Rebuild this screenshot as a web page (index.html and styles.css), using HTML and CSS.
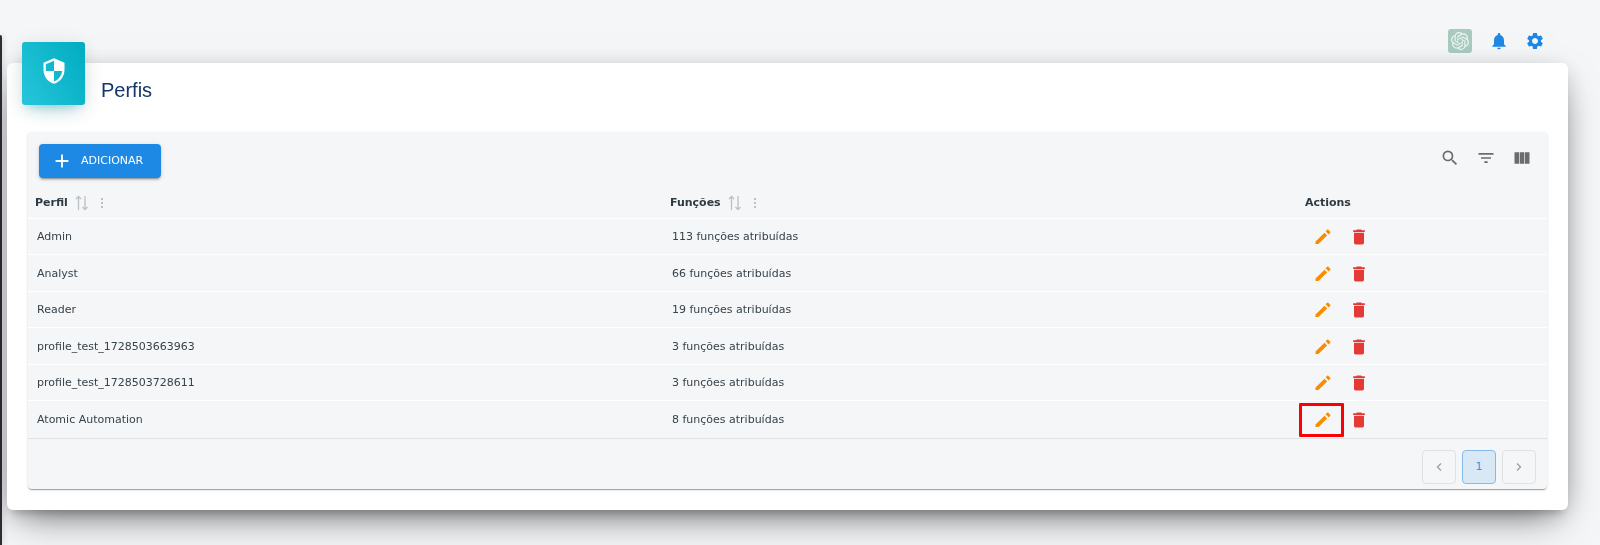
FILE: index.html
```html
<!DOCTYPE html>
<html lang="pt-BR">
<head>
<meta charset="utf-8">
<title>Perfis</title>
<link rel="stylesheet" href="styles.css">
</head>
<body>
<svg class="sprite" aria-hidden="true">
  <symbol id="pencil" viewBox="0 0 24 24"><path d="M3 17.500V20.500h3.500L17 10.200 13.800 7zM20.700 7c.4-.4.4-1 0-1.400l-2.300-2.300c-.4-.4-1-.4-1.400 0l-1.900 1.900 3.700 3.700z"/></symbol>
  <symbol id="trash" viewBox="0 0 24 24"><path d="M6 19c0 1.100.9 2 2 2h8c1.100 0 2-.9 2-2V7H6zM19 4h-3.500l-1-1h-5l-1 1H5v2h14z"/></symbol>
  <symbol id="sort" viewBox="0 0 14 16"><path d="M3.500 15V1.500M1 4l2.500-2.500L6 4M10 1v13.500M7.500 12l2.500 2.500 2.500-2.500" fill="none" stroke="currentColor" stroke-width="1.300"/></symbol>
  <symbol id="dots" viewBox="0 0 4 14"><path d="M1 2h2v2H1zM1 6h2v2H1zM1 10h2v2H1z"/></symbol>
</svg>
<aside class="rail"></aside>
<header class="topbar">
  <button class="icon-btn gpt" aria-label="Assistente">
    <svg viewBox="0 0 24 24"><path d="M22.282 9.821a5.985 5.985 0 0 0-.516-4.910 6.046 6.046 0 0 0-6.510-2.900A6.065 6.065 0 0 0 4.981 4.182a5.985 5.985 0 0 0-3.998 2.900 6.046 6.046 0 0 0 .743 7.097 5.980 5.980 0 0 0 .511 4.911 6.051 6.051 0 0 0 6.515 2.900A5.985 5.985 0 0 0 13.260 24a6.056 6.056 0 0 0 5.772-4.206 5.990 5.990 0 0 0 3.998-2.900 6.056 6.056 0 0 0-.748-7.073zM13.260 22.430a4.476 4.476 0 0 1-2.876-1.040l.142-.081 4.778-2.758a.795.795 0 0 0 .393-.681v-6.737l2.020 1.169a.071.071 0 0 1 .038.052v5.583a4.504 4.504 0 0 1-4.495 4.493zM3.600 18.304a4.471 4.471 0 0 1-.535-3.014l.142.085 4.783 2.759a.771.771 0 0 0 .781 0l5.843-3.369v2.332a.080.080 0 0 1-.033.062L9.740 19.950a4.500 4.500 0 0 1-6.140-1.646zM2.341 7.896a4.485 4.485 0 0 1 2.366-1.973V11.600a.766.766 0 0 0 .388.677l5.815 3.354-2.020 1.169a.076.076 0 0 1-.071 0l-4.830-2.787A4.504 4.504 0 0 1 2.341 7.872zm16.597 3.855l-5.833-3.387L15.119 7.200a.076.076 0 0 1 .071 0l4.830 2.791a4.494 4.494 0 0 1-.676 8.105v-5.678a.790.790 0 0 0-.407-.667zm2.011-3.023l-.142-.085-4.774-2.782a.776.776 0 0 0-.785 0L9.409 9.230V6.897a.066.066 0 0 1 .028-.061l4.830-2.787a4.499 4.499 0 0 1 6.680 4.660zm-12.640 4.135l-2.020-1.164a.080.080 0 0 1-.038-.057V6.075a4.499 4.499 0 0 1 7.376-3.454l-.142.081L8.704 5.460a.795.795 0 0 0-.393.681zm1.097-2.365l2.602-1.500 2.607 1.500v2.999l-2.597 1.500-2.607-1.500z"/></svg>
  </button>
  <button class="icon-btn" aria-label="Notificações">
    <svg viewBox="0 0 24 24"><path d="M12 22c1.100 0 2-.9 2-2h-4c0 1.100.9 2 2 2zm6-6v-5c0-3.070-1.640-5.640-4.500-6.320V4c0-.83-.67-1.500-1.500-1.500s-1.500.67-1.500 1.500v.68C7.630 5.360 6 7.920 6 11v5l-2 2v1h16v-1z"/></svg>
  </button>
  <button class="icon-btn" aria-label="Configurações">
    <svg viewBox="0 0 24 24"><path d="M19.140 12.940c.04-.3.060-.61.060-.94 0-.32-.02-.64-.07-.94l2.030-1.580c.18-.14.230-.41.120-.61l-1.920-3.320c-.12-.22-.37-.29-.59-.22l-2.390.96c-.5-.38-1.030-.7-1.620-.94l-.36-2.540c-.04-.24-.24-.41-.48-.41h-3.840c-.24 0-.43.170-.47.410l-.36 2.540c-.59.240-1.130.570-1.620.940l-2.390-.96c-.22-.08-.47 0-.59.220L2.740 8.870c-.12.210-.08.470.120.610l2.030 1.580c-.05.300-.09.630-.09.940s.020.640.070.940l-2.030 1.580c-.18.140-.23.410-.12.610l1.920 3.320c.12.220.37.290.59.220l2.390-.96c.5.380 1.030.700 1.620.940l.36 2.540c.05.240.24.410.48.410h3.840c.24 0 .44-.17.470-.41l.36-2.540c.59-.24 1.130-.56 1.620-.94l2.390.96c.22.080.47 0 .59-.22l1.920-3.320c.12-.22.070-.47-.12-.61zM12 15.600c-1.980 0-3.600-1.620-3.600-3.600s1.620-3.600 3.600-3.600 3.600 1.620 3.600 3.600-1.620 3.600-3.600 3.600z"/></svg>
  </button>
</header>
<main class="card">
  <div class="card-head">
    <div class="badge">
      <svg viewBox="0 0 24 24"><path d="M12 1L3 5v6c0 5.550 3.840 10.740 9 12 5.160-1.260 9-6.450 9-12V5zm0 10.990h7c-.53 4.120-3.280 7.790-7 8.940V12H5V6.300l7-3.110z"/></svg>
    </div>
    <h1 class="title">Perfis</h1>
  </div>
  <section class="panel">
    <div class="toolbar">
      <button class="add"><svg viewBox="0 0 24 24"><path d="M19 13h-6v6h-2v-6H5v-2h6V5h2v6h6z"/></svg>ADICIONAR</button>
      <div class="tools">
        <button class="icon-btn" aria-label="Buscar"><svg viewBox="0 0 24 24"><path d="M15.500 14h-.79l-.28-.27A6.471 6.471 0 0 0 16 9.500 6.500 6.500 0 1 0 9.500 16c1.610 0 3.090-.59 4.230-1.570l.27.280v.79l5 4.990L20.490 19zm-6 0C7.010 14 5 11.990 5 9.500S7.010 5 9.500 5 14 7.010 14 9.500 11.990 14 9.500 14z"/></svg></button>
        <button class="icon-btn" aria-label="Filtrar"><svg viewBox="0 0 24 24"><path d="M10 18h4v-2h-4zM3 6v2h18V6zm3 7h12v-2H6z"/></svg></button>
        <button class="icon-btn" aria-label="Colunas"><svg viewBox="0 0 24 24"><path d="M3 5h5.500v14H3zM9.300 5h5.400v14H9.300zM15.500 5H21v14h-5.500z"/></svg></button>
      </div>
    </div>
    <table class="grid">
      <thead>
        <tr>
          <th class="wide"><div class="th">Perfil<button class="mini" aria-label="Ordenar perfil"><svg class="sort"><use href="#sort"/></svg></button><button class="mini" aria-label="Menu perfil"><svg class="dots"><use href="#dots"/></svg></button></div></th>
          <th class="wide"><div class="th">Funções<button class="mini" aria-label="Ordenar funções"><svg class="sort"><use href="#sort"/></svg></button><button class="mini" aria-label="Menu funções"><svg class="dots"><use href="#dots"/></svg></button></div></th>
          <th><div class="th">Actions</div></th>
        </tr>
      </thead>
      <tbody>
        <tr><td>Admin</td><td>113 funções atribuídas</td><td><div class="acts"><button class="act edit" aria-label="Editar"><svg><use href="#pencil"/></svg></button><button class="act del" aria-label="Excluir"><svg><use href="#trash"/></svg></button></div></td></tr>
        <tr><td>Analyst</td><td>66 funções atribuídas</td><td><div class="acts"><button class="act edit" aria-label="Editar"><svg><use href="#pencil"/></svg></button><button class="act del" aria-label="Excluir"><svg><use href="#trash"/></svg></button></div></td></tr>
        <tr><td>Reader</td><td>19 funções atribuídas</td><td><div class="acts"><button class="act edit" aria-label="Editar"><svg><use href="#pencil"/></svg></button><button class="act del" aria-label="Excluir"><svg><use href="#trash"/></svg></button></div></td></tr>
        <tr><td>profile_test_1728503663963</td><td>3 funções atribuídas</td><td><div class="acts"><button class="act edit" aria-label="Editar"><svg><use href="#pencil"/></svg></button><button class="act del" aria-label="Excluir"><svg><use href="#trash"/></svg></button></div></td></tr>
        <tr><td>profile_test_1728503728611</td><td>3 funções atribuídas</td><td><div class="acts"><button class="act edit" aria-label="Editar"><svg><use href="#pencil"/></svg></button><button class="act del" aria-label="Excluir"><svg><use href="#trash"/></svg></button></div></td></tr>
        <tr><td>Atomic Automation</td><td>8 funções atribuídas</td><td><div class="acts"><button class="act edit marked" aria-label="Editar"><svg><use href="#pencil"/></svg></button><button class="act del" aria-label="Excluir"><svg><use href="#trash"/></svg></button></div></td></tr>
      </tbody>
    </table>
    <nav class="pager" aria-label="Paginação">
      <button class="page" aria-label="Anterior"><svg viewBox="0 0 8 10"><path d="M6 1.500L2.500 5 6 8.500"/></svg></button>
      <button class="page current" aria-current="page">1</button>
      <button class="page" aria-label="Próxima"><svg viewBox="0 0 8 10"><path d="M2 1.500L5.500 5 2 8.500"/></svg></button>
    </nav>
  </section>
</main>
</body>
</html>
```
FILE: styles.css
```css
* { box-sizing: border-box; }
html { min-height: 100%; background: #f4f6f8; }
body {
  margin: 0;
  font: 11px/16px Verdana, "DejaVu Sans", sans-serif;
  color: #37434a;
}
button {
  padding: 0;
  border: 0;
  background: none;
  font: inherit;
  color: inherit;
  cursor: pointer;
}
svg { display: block; fill: currentColor; }
.sprite { position: absolute; width: 0; height: 0; }

.rail {
  position: fixed;
  left: 0;
  top: 35px;
  bottom: 0;
  width: 2px;
  border-radius: 0 2px 0 0;
  background: #2f2e33;
  box-shadow: 0 0 6px rgba(0,0,0,.3);
}

.topbar {
  display: flex;
  justify-content: flex-end;
  align-items: flex-start;
  gap: 16px;
  height: 63px;
  padding: 29px 55px 0 0;
  color: #1e88e5;
}
.icon-btn {
  display: grid;
  place-items: center;
  width: 20px;
  height: 24px;
}
.icon-btn svg { width: 20px; height: 20px; }
.gpt {
  width: 24px;
  margin-right: 1px;
  border-radius: 3px;
  background: #a9cbbf;
  color: #eef6f3;
}
.gpt svg { width: 18px; height: 18px; }

.card {
  position: relative;
  margin: 0 32px 35px 7px;
  padding: 0 21px 21px;
  border-radius: 6px;
  background: #fff;
  box-shadow: 0 16px 38px -12px rgba(0,0,0,.56), 0 4px 25px 0 rgba(0,0,0,.12), 0 8px 10px -5px rgba(0,0,0,.2);
}
.card-head {
  display: flex;
  gap: 16px;
  height: 69px;
  margin-left: -6px;
}
.badge {
  display: grid;
  justify-items: center;
  width: 63px;
  height: 63px;
  margin-top: -21px;
  padding-top: 15px;
  border-radius: 3px;
  background: linear-gradient(60deg, #26c6da, #00acc1);
  box-shadow: 0 12px 20px -10px rgba(0,172,193,.28), 0 4px 20px 0 rgba(0,0,0,.12), 0 7px 8px -5px rgba(0,172,193,.2);
  color: #fff;
}
.badge svg { width: 28px; height: 28px; }
.title {
  margin: 15px 0 0;
  font: 20px/24px "Liberation Sans", Arial, sans-serif;
  color: #14366b;
}

.panel {
  border-radius: 4px;
  background: #f4f6f8;
  box-shadow: 0 2px 1px -1px rgba(0,0,0,.2), 0 1px 1px 0 rgba(0,0,0,.14), 0 1px 3px 0 rgba(0,0,0,.12);
}
.toolbar {
  display: flex;
  justify-content: space-between;
  align-items: flex-start;
  height: 56px;
  padding: 12px 15px 0 11px;
}
.add {
  display: flex;
  align-items: center;
  gap: 8px;
  height: 34px;
  padding: 0 18px 0 12px;
  border-radius: 4px;
  background: #1e88e5;
  box-shadow: 0 3px 1px -2px rgba(0,0,0,.2), 0 2px 2px 0 rgba(0,0,0,.14), 0 1px 5px 0 rgba(0,0,0,.12);
  color: #fff;
}
.add svg { width: 22px; height: 22px; }
.tools { display: flex; gap: 16px; padding-top: 2px; color: #6c6c6c; }

.grid { width: 100%; table-layout: fixed; border-collapse: separate; border-spacing: 0; }
.grid th, .grid td { padding: 0 7px; text-align: left; border-bottom: 1px solid #fff; }
.grid td { padding: 1px 0 0 9px; }
.grid th { height: 31px; color: #2f3b42; font-weight: 700; }
.wide { width: 41.8%; }
.th { display: flex; align-items: center; }
.mini { color: #bcc1c5; }
.sort { width: 14px; height: 16px; margin-left: 7px; }
.dots { width: 4px; height: 14px; margin-left: 11px; }
.grid tbody tr { height: 36px; }
.grid tbody tr:nth-child(even) { height: 37px; }
.grid tbody tr:last-child { height: 38px; }
.grid tbody tr:last-child td { border-bottom-color: #dfe2e5; }
.acts { display: flex; align-items: center; gap: 16px; margin-left: 6px; }
.act { position: relative; width: 20px; height: 20px; }
.act svg { width: 20px; height: 20px; }
.edit { color: #fb8c00; }
.del { color: #e53935; }
.marked::after {
  content: "";
  position: absolute;
  inset: -7px -11px -7px -14px;
  border: 3px solid #fb0007;
  border-radius: 1px;
}

.pager {
  display: flex;
  justify-content: flex-end;
  gap: 6px;
  padding: 11px 11px 5px;
}
.page {
  display: grid;
  place-items: center;
  width: 34px;
  height: 34px;
  border: 1px solid #dfe2e5;
  border-radius: 4px;
  color: #9aa0a5;
}
.page svg { width: 8px; height: 10px; fill: none; stroke: currentColor; stroke-width: 1.300; }
.current { border-color: #85b9ea; background: #d8e8f5; color: #3d92dd; }
```
